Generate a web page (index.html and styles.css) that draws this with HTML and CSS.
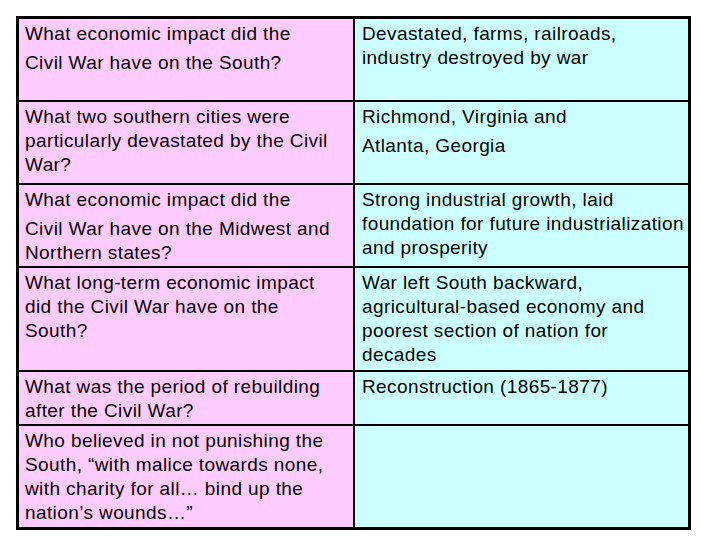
FILE: index.html
```html
<!DOCTYPE html>
<html>
<head>
<meta charset="utf-8">
<link rel="stylesheet" href="styles.css">
</head>
<body>
<div class="table">
  <div class="cell q"><div class="ln">What economic impact did the</div><div class="ln gap">Civil War have on the South?</div></div>
  <div class="cell a"><div class="ln">Devastated, farms, railroads,</div><div class="ln">industry destroyed by war</div></div>

  <div class="cell q"><div class="ln">What two southern cities were</div><div class="ln">particularly devastated by the Civil</div><div class="ln">War?</div></div>
  <div class="cell a"><div class="ln">Richmond, Virginia and</div><div class="ln gap">Atlanta, Georgia</div></div>

  <div class="cell q"><div class="ln">What economic impact did the</div><div class="ln gap">Civil War have on the Midwest and</div><div class="ln">Northern states?</div></div>
  <div class="cell a"><div class="ln">Strong industrial growth, laid</div><div class="ln">foundation for future industrialization</div><div class="ln">and prosperity</div></div>

  <div class="cell q"><div class="ln">What long-term economic impact</div><div class="ln">did the Civil War have on the</div><div class="ln">South?</div></div>
  <div class="cell a"><div class="ln">War left South backward,</div><div class="ln">agricultural-based economy and</div><div class="ln">poorest section of nation for</div><div class="ln">decades</div></div>

  <div class="cell q"><div class="ln">What was the period of rebuilding</div><div class="ln">after the Civil War?</div></div>
  <div class="cell a"><div class="ln">Reconstruction (1865-1877)</div></div>

  <div class="cell q"><div class="ln">Who believed in not punishing the</div><div class="ln">South, “with malice towards none,</div><div class="ln">with charity for all… bind up the</div><div class="ln">nation’s wounds…”</div></div>
  <div class="cell a"></div>
</div>
</body>
</html>
```
FILE: styles.css
```css
html, body {
  margin: 0;
  padding: 0;
  background: #ffffff;
}
body {
  padding: 16px 0 0 16px;
  font-family: "Liberation Sans", Arial, sans-serif;
  font-size: 19px;
  letter-spacing: 0.4px;
  color: #000000;
}
.table {
  display: grid;
  width: 675px;
  box-sizing: border-box;
  grid-template-columns: 334px 333px;
  grid-template-rows: 81px 81px 81px 102px 52px 101px;
  gap: 2px;
  padding: 3px;
  background: #000000;
}
.cell {
  padding: 3px 6px 0 6px;
  line-height: 24px;
  overflow: hidden;
}
.q {
  background: #ffccff;
}
.a {
  background: #ccffff;
  padding-left: 7px;
}
.ln {
  white-space: nowrap;
}
.gap {
  margin-top: 5px;
}
```
